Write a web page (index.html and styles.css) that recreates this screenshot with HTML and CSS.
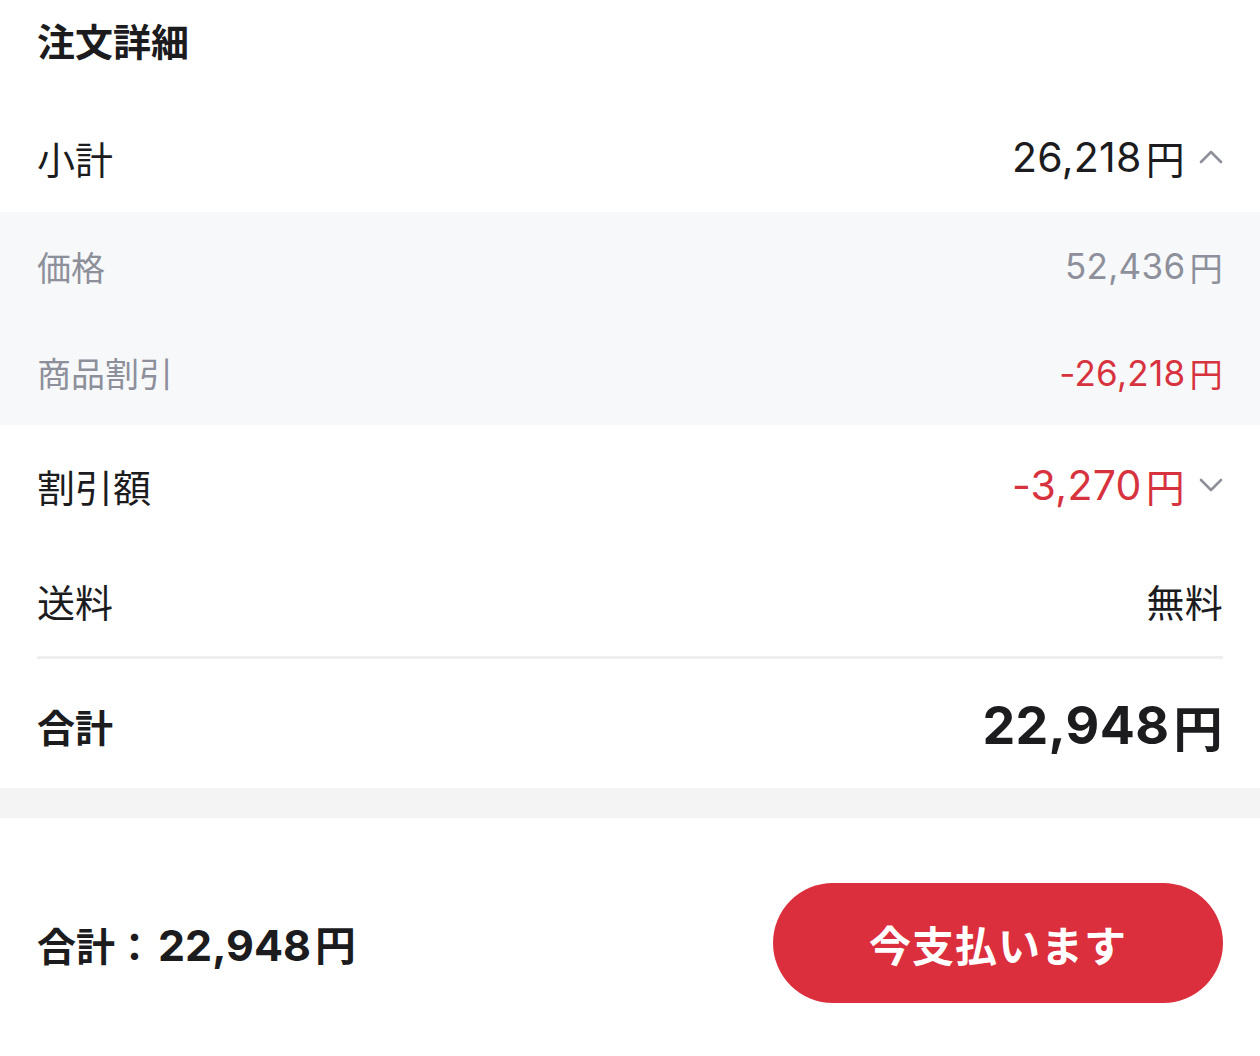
FILE: index.html
```html
<!DOCTYPE html>
<html lang="ja">
<head>
    <meta charset="UTF-8">
    <meta name="viewport" content="width=device-width, initial-scale=1.0">
    <title>注文詳細</title>
    <link rel="stylesheet" href="styles.css">
</head>
<body>
    <div class="order">
        <h1 class="title">注文詳細</h1>

        <div class="row row-subtotal">
            <span class="label">小計</span>
            <span class="value">26,218<span class="yen">円</span>
                <svg class="chevron" viewBox="0 0 24 14"><path d="M2 12 L12 2 L22 12"/></svg>
            </span>
        </div>

        <div class="breakdown">
            <div class="row row-sub">
                <span class="label">価格</span>
                <span class="value">52,436<span class="yen">円</span></span>
            </div>
            <div class="row row-sub row-sub-last">
                <span class="label">商品割引</span>
                <span class="value red">-26,218<span class="yen">円</span></span>
            </div>
        </div>

        <div class="row row-discount">
            <span class="label">割引額</span>
            <span class="value red">-3,270<span class="yen">円</span>
                <svg class="chevron" viewBox="0 0 24 14"><path d="M2 2 L12 12 L22 2"/></svg>
            </span>
        </div>

        <div class="row row-shipping">
            <span class="label">送料</span>
            <span class="value cjk">無料</span>
        </div>

        <div class="divider"></div>

        <div class="row row-total">
            <span class="label">合計</span>
            <span class="value">22,948<span class="yen">円</span></span>
        </div>
    </div>

    <div class="gap"></div>

    <div class="pay-bar">
        <div class="pay-total"><span class="pay-label">合計：</span>22,948<span class="yen">円</span></div>
        <button class="pay-button">今支払います</button>
    </div>
</body>
</html>
```

FILE: styles.css
```css
body {
    margin: 0;
    font-family: 'Inter', 'Noto Sans CJK JP', sans-serif;
    color: #1c1c1e;
    background: #fff;
    width: 1260px;
}

.title {
    margin: 0;
    height: 102px;
    box-sizing: border-box;
    padding: 19px 37px 0;
    font-size: 38px;
    line-height: 46px;
    font-weight: 700;
}

.row {
    display: flex;
    justify-content: space-between;
    align-items: center;
    padding: 0 37px;
    font-size: 38px;
}

.row .value {
    display: flex;
    align-items: center;
    font-size: 41px;
    letter-spacing: 0.3px;
}

.row .value.cjk {
    font-size: 38px;
}

.yen {
    margin-left: 4px;
    font-size: 0.95em;
}

.chevron {
    width: 24px;
    height: 14px;
    margin-left: 14px;
    fill: none;
    stroke: #8e9099;
    stroke-width: 2.6;
    stroke-linecap: round;
    stroke-linejoin: round;
}

.row-subtotal {
    height: 110px;
}

.breakdown {
    background: #f7f8fa;
}

.row-sub {
    height: 108px;
    font-size: 34px;
    color: #8d909a;
}

.row-sub .value {
    font-size: 35px;
}

.row-sub-last {
    height: 105px;
}

.row-discount {
    height: 120px;
}

.row-shipping {
    height: 111px;
}

.red,
.row-sub .red {
    color: #d7333f;
}

.divider {
    height: 3px;
    margin: 0 37px;
    background: #efefef;
}

.row-total {
    height: 129px;
    padding-top: 4px;
    box-sizing: border-box;
    font-weight: 700;
}

.row-total .value {
    font-size: 52px;
}

.gap {
    height: 30px;
    background: #f4f4f4;
}

.pay-bar {
    display: flex;
    justify-content: space-between;
    align-items: center;
    height: 238px;
    padding: 12px 37px 0;
    box-sizing: border-box;
}

.pay-total {
    font-size: 43px;
    font-weight: 700;
}

.pay-label {
    font-size: 39px;
    margin-right: 4px;
}

.pay-button {
    width: 450px;
    height: 120px;
    border: none;
    border-radius: 60px;
    background: #dc2f3d;
    color: #fff;
    font-family: 'Noto Sans CJK JP', sans-serif;
    font-size: 42px;
    font-weight: 700;
    letter-spacing: 1px;
}
```
